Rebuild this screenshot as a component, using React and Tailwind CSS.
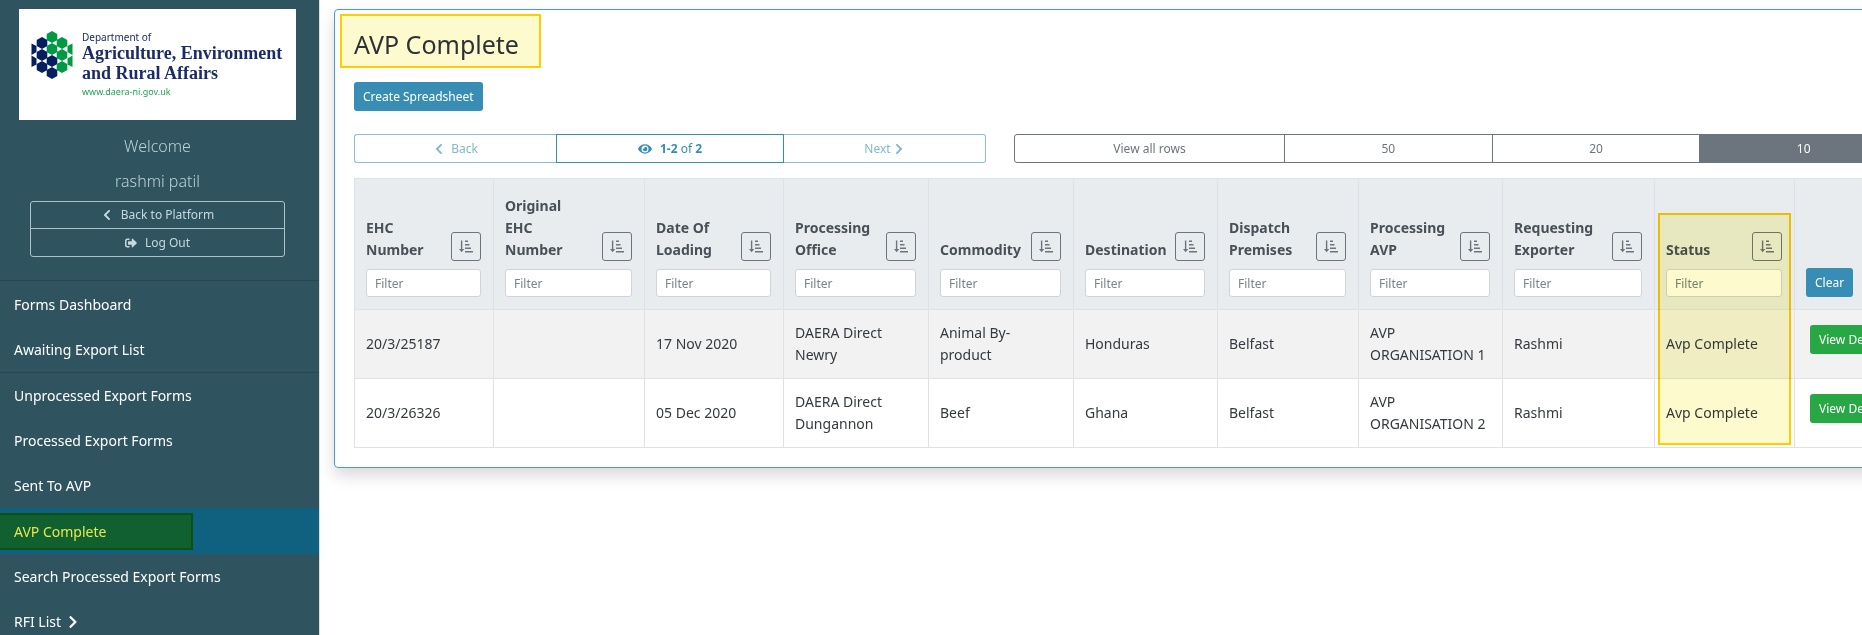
import { FaChevronLeft, FaChevronRight, FaEye, FaSignOutAlt } from "react-icons/fa";

const NAVY = "#061f5c";
const GREEN = "#009a44";

const columns = [
  { key: "ehc", label: "EHC Number", width: "w-[139px]" },
  { key: "original", label: "Original EHC Number", width: "w-[151px]" },
  { key: "loading", label: "Date Of Loading", width: "w-[139px]" },
  { key: "office", label: "Processing Office", width: "w-[145px]" },
  { key: "commodity", label: "Commodity", width: "w-[145px]" },
  { key: "destination", label: "Destination", width: "w-[144px]" },
  { key: "premises", label: "Dispatch Premises", width: "w-[141px]" },
  { key: "avp", label: "Processing AVP", width: "w-[144px]" },
  { key: "exporter", label: "Requesting Exporter", width: "w-[152px]" },
  { key: "status", label: "Status", width: "w-[140px]" },
];

const rows = [
  {
    ehc: "20/3/25187",
    original: "",
    loading: "17 Nov 2020",
    office: "DAERA Direct Newry",
    commodity: "Animal By-product",
    destination: "Honduras",
    premises: "Belfast",
    avp: "AVP ORGANISATION 1",
    exporter: "Rashmi",
    status: "Avp Complete",
  },
  {
    ehc: "20/3/26326",
    original: "",
    loading: "05 Dec 2020",
    office: "DAERA Direct Dungannon",
    commodity: "Beef",
    destination: "Ghana",
    premises: "Belfast",
    avp: "AVP ORGANISATION 2",
    exporter: "Rashmi",
    status: "Avp Complete",
  },
];

// centre x, centre y, colour
const cells = [
  [21, 6, GREEN],
  [11, 12, NAVY],
  [31, 12, GREEN],
  [21, 18, GREEN],
  [11, 24, NAVY],
  [31, 24, GREEN],
  [21, 30, NAVY],
  [11, 36, NAVY],
  [31, 36, GREEN],
  [21, 42, NAVY],
];

function Logo() {
  return (
    <div className="flex h-[111px] items-start gap-[9px] bg-white pt-[22px] pl-3">
      <svg viewBox="0 0 42 48" className="h-12 w-[42px] shrink-0" aria-hidden="true">
        {cells.map(([x, y, fill]) => (
          <path key={`${x}-${y}`} fill={fill} d={`M${x} ${y - 5.9}l5.300 2.900v6l-5.300 2.900l-5.300 -2.900v-6z`} />
        ))}
        <path fill={NAVY} d="M.5 12.500l5 2.500v6l-5 3zM.5 24.500l5 3v6l-5 2.500z" />
        <path fill={GREEN} d="M41.500 12.500l-5 2.500v6l5 3zM41.500 24.500l-5 3v6l5 2.500z" />
      </svg>
      <div className="whitespace-nowrap text-[#1c2c66]">
        <div className="text-[10px] leading-[12px]">Department of</div>
        <div className="font-['Liberation_Serif',serif] text-[18px] font-bold leading-[20px]">
          Agriculture, Environment
          <br />
          and Rural Affairs
        </div>
        <div className="mt-[2px] text-[9px] leading-[14px] text-[#1fa355]">www.daera-ni.gov.uk</div>
      </div>
    </div>
  );
}

function SortIcon() {
  return (
    <svg viewBox="0 0 14 13" className="h-[13px] w-3.5" fill="currentColor" aria-hidden="true">
      <path d="M1.900 .5h1.400v8.500h2l-2.700 3.300L0 9h1.900z" />
      <path d="M6 .5h3v1.400H6zM6 4h4.500v1.400H6zM6 7.500h6v1.400H6zM6 11h8v1.400H6z" />
    </svg>
  );
}

function NavItem({ children }) {
  return (
    <a href="#" className="flex h-[45px] items-center gap-1.5 px-3.5 text-white">
      {children}
    </a>
  );
}

function Sidebar() {
  return (
    <aside className="w-80 shrink-0 border-r border-[#d5dfe3] bg-[#2f545f] text-[14px]">
      <div className="pt-[9px] pr-[23px] pl-[19px]">
        <Logo />
      </div>
      <div className="pt-[9px] pr-[34px] pl-[30px] text-center text-[16px] font-light leading-[35px] text-[#b9d0d8]">
        <p>Welcome</p>
        <p>rashmi patil</p>
      </div>
      <div className="mt-[2px] mr-[34px] mb-[23px] ml-[30px] divide-y divide-[#a9c2cb] rounded-[3px] border border-[#a9c2cb] text-[12px] text-[#c5d8df]">
        <button type="button" className="flex h-[27px] w-full items-center justify-center gap-2">
          <FaChevronLeft className="h-3 w-3" />
          Back to Platform
        </button>
        <button type="button" className="flex h-[27px] w-full items-center justify-center gap-2">
          <FaSignOutAlt className="h-3 w-3" />
          Log Out
        </button>
      </div>
      <nav>
        <div className="border-t border-[#28464f] pt-px">
          <NavItem>Forms Dashboard</NavItem>
          <NavItem>Awaiting Export List</NavItem>
        </div>
        <div className="border-t border-[#28464f]">
          <NavItem>Unprocessed Export Forms</NavItem>
          <NavItem>Processed Export Forms</NavItem>
          <NavItem>Sent To AVP</NavItem>
          <a href="#" aria-current="page" className="flex h-[46px] items-center bg-[#10617f]">
            <span className="flex h-[37px] w-[193px] items-center border-2 border-l-0 border-[#0e5012] bg-[#10612f] px-3.5 text-[#e6e64f]">
              AVP Complete
            </span>
          </a>
          <NavItem>Search Processed Export Forms</NavItem>
          <NavItem>
            RFI List <FaChevronRight className="h-3.5 w-3" />
          </NavItem>
        </div>
      </nav>
    </aside>
  );
}

function Toolbar() {
  return (
    <div className="mt-[23px] flex gap-7 text-[12px]">
      <div className="flex h-[29px] w-[632px]">
        <button type="button" className="flex w-[202px] items-center justify-center gap-1.5 rounded-l-[3px] border border-r-0 border-[#8bbfd6] text-[#82b8cf]">
          <FaChevronLeft className="h-3 w-3" />
          Back
        </button>
        <button type="button" className="flex w-[228px] items-center justify-center gap-2 border border-[#378db3] text-[#378db3]">
          <FaEye className="h-3.5 w-3.5" />
          <span>
            <b>1-2</b> of <b>2</b>
          </span>
        </button>
        <button type="button" className="flex w-[202px] items-center justify-center gap-0.5 rounded-r-[3px] border border-l-0 border-[#8bbfd6] text-[#82b8cf]">
          Next
          <FaChevronRight className="h-3 w-3" />
        </button>
      </div>
      <div className="flex h-[29px] flex-1 divide-x divide-[#6c757d] overflow-hidden rounded-[3px] border border-[#6c757d] text-[#6c757d]">
        <button type="button" className="w-[270px]">View all rows</button>
        <button type="button" className="flex-1">50</button>
        <button type="button" className="flex-1">20</button>
        <button type="button" className="flex-1 bg-[#6c757d] text-white">10</button>
      </div>
    </div>
  );
}

function HeaderCell({ column }) {
  return (
    <th scope="col" className="relative border border-[#dee2e6] pr-3 pb-3 pl-[11px] text-left align-bottom">
      <div className="flex items-end justify-between">
        <label
          htmlFor={`filter-${column.key}`}
          className="max-w-[84px] text-[14px] font-bold leading-[22px] text-[#495057]"
        >
          {column.label}
        </label>
        <button
          type="button"
          aria-label={`Sort by ${column.label}`}
          className="flex h-[29px] w-[30px] shrink-0 items-center justify-center rounded-[3px] border border-[#6c757d] text-[#6c757d]"
        >
          <SortIcon />
        </button>
      </div>
      <input
        id={`filter-${column.key}`}
        type="text"
        placeholder="Filter"
        className="mt-2 block h-[28px] w-full rounded-[3px] border border-[#ced4da] bg-white px-2 text-[12px] font-normal placeholder:text-[#7a828a]"
      />
      {column.key === "status" && (
        <div className="pointer-events-none absolute top-[34px] right-[3px] left-[3px] h-[232px] border-2 border-[#ffcc00] bg-[#fdfacd] mix-blend-multiply" />
      )}
    </th>
  );
}

function FormsTable() {
  return (
    <table className="mt-[15px] w-full table-fixed border-collapse text-[14px] leading-[22px] text-[#343a40]">
      <colgroup>
        {columns.map((column) => (
          <col key={column.key} className={column.width} />
        ))}
        <col />
      </colgroup>
      <thead>
        <tr className="h-[131px] bg-[#e9ecef]">
          {columns.map((column) => (
            <HeaderCell key={column.key} column={column} />
          ))}
          <th scope="col" className="border border-[#dee2e6] px-[11px] pb-3 text-left align-bottom">
            <button type="button" className="block h-[29px] rounded-[3px] bg-[#378db3] px-[9px] text-[12px] font-normal text-white">
              Clear
            </button>
          </th>
        </tr>
      </thead>
      <tbody>
        {rows.map((row) => (
          <tr key={row.ehc} className="h-[69px] odd:bg-[#f2f2f2]">
            {columns.map((column) => (
              <td key={column.key} className="border border-[#dee2e6] pr-[13px] pl-[11px]">
                {row[column.key]}
              </td>
            ))}
            <td className="border border-[#dee2e6] px-[15px] pt-[15px] align-top">
              <button type="button" className="block h-[29px] rounded-[3px] bg-[#28a745] px-[9px] text-[12px] whitespace-nowrap text-white">
                View Details
              </button>
            </td>
          </tr>
        ))}
      </tbody>
    </table>
  );
}

export default function App() {
  return (
    <div className="flex h-screen overflow-hidden bg-white font-['Noto_Sans','Open_Sans',sans-serif]">
      <Sidebar />
      <main className="min-w-0 flex-1 overflow-hidden pt-[9px] pl-3.5">
        <section className="min-w-[1594px] rounded-[4px] border border-[#4a9cc0] px-[19px] pt-1 pb-[19px] shadow-[0_8px_16px_rgba(0,0,0,0.15)]">
          <h1 className="-ml-3.5 flex h-[54px] w-[201px] items-center border-2 border-[#ffcc00] bg-[#fdfacd] pt-2 pl-3 text-[25px] text-[#2d3236]">
            AVP Complete
          </h1>
          <button type="button" className="mt-3.5 block h-[29px] rounded-[3px] bg-[#378db3] px-[9px] text-[12px] text-white">
            Create Spreadsheet
          </button>
          <Toolbar />
          <FormsTable />
        </section>
      </main>
    </div>
  );
}
